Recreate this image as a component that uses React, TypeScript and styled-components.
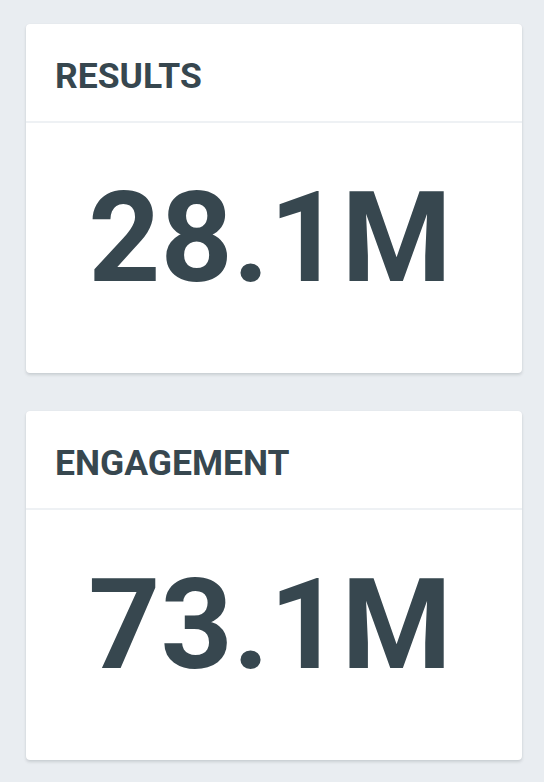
import React from "react";
import styled, { createGlobalStyle } from "styled-components";

const GlobalStyle = createGlobalStyle`
	html, body {
		margin: 0;
		padding: 0;
		background: #e9edf1;
		font-family: Roboto, "Noto Sans", "Liberation Sans", sans-serif;
	}
`;

const stats = [
	{ title: "RESULTS", value: "28.1M" },
	{ title: "ENGAGEMENT", value: "73.1M" },
];

const App = () => {
	return (
		<>
			<GlobalStyle />
			<Page>
				{stats.map((stat) => (
					<Card key={stat.title}>
						<CardHeader>
							<Title>{stat.title}</Title>
						</CardHeader>
						<CardBody>
							<Value>{stat.value}</Value>
						</CardBody>
					</Card>
				))}
			</Page>
		</>
	);
};

export default App;

const Page = styled.div`
	display: flex;
	flex-direction: column;
	gap: 38px;
	padding: 24px 22px 22px 26px;
	min-height: 782px;
	box-sizing: border-box;
`;

const Card = styled.div`
	display: flex;
	flex-direction: column;
	height: 349px;
	background: #ffffff;
	border-radius: 4px;
	box-shadow: 0 2px 3px rgba(60, 70, 80, 0.18), 0 0 1px rgba(60, 70, 80, 0.08);
	overflow: hidden;
`;

const CardHeader = styled.div`
	display: flex;
	align-items: center;
	height: 99px;
	padding: 6px 30px 0 29px;
	box-sizing: border-box;
	border-bottom: 2px solid #eef1f4;
`;

const Title = styled.h2`
	margin: 0;
	font-size: 35.5px;
	font-weight: 700;
	color: #37474f;
	letter-spacing: 0;
`;

const CardBody = styled.div`
	flex: 1;
	display: flex;
	align-items: center;
	justify-content: center;
	padding-bottom: 20px;
	padding-right: 8px;
`;

const Value = styled.div`
	font-size: 126px;
	font-weight: 700;
	line-height: 1;
	color: #37474f;
`;
